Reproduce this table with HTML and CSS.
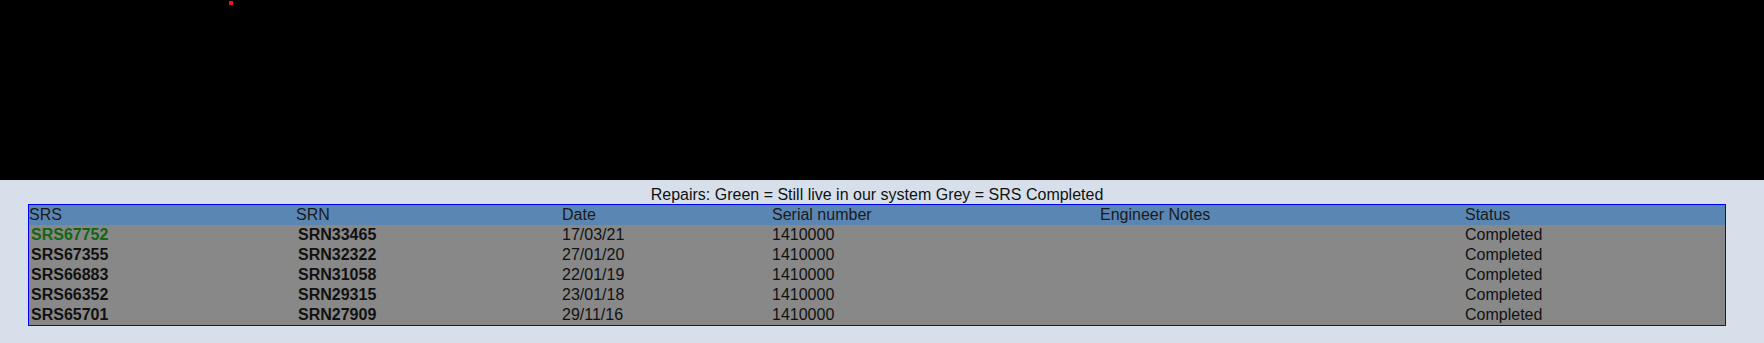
FILE: index.html
```html
<!DOCTYPE html>
<html>
<head>
<meta charset="utf-8">
<link rel="stylesheet" href="styles.css">
</head>
<body>
<div class="top">
  <span class="dot"></span>
</div>
<div class="content">
  <table class="repairs">
    <caption>Repairs: Green = Still live in our system Grey = SRS Completed</caption>
    <colgroup>
      <col class="c-srs">
      <col class="c-srn">
      <col class="c-date">
      <col class="c-serial">
      <col class="c-notes">
      <col class="c-status">
    </colgroup>
    <thead>
      <tr>
        <th>SRS</th>
        <th>SRN</th>
        <th>Date</th>
        <th>Serial number</th>
        <th>Engineer Notes</th>
        <th>Status</th>
      </tr>
    </thead>
    <tbody>
      <tr>
        <td class="id live">SRS67752</td>
        <td class="id">SRN33465</td>
        <td>17/03/21</td>
        <td>1410000</td>
        <td></td>
        <td>Completed</td>
      </tr>
      <tr>
        <td class="id">SRS67355</td>
        <td class="id">SRN32322</td>
        <td>27/01/20</td>
        <td>1410000</td>
        <td></td>
        <td>Completed</td>
      </tr>
      <tr>
        <td class="id">SRS66883</td>
        <td class="id">SRN31058</td>
        <td>22/01/19</td>
        <td>1410000</td>
        <td></td>
        <td>Completed</td>
      </tr>
      <tr>
        <td class="id">SRS66352</td>
        <td class="id">SRN29315</td>
        <td>23/01/18</td>
        <td>1410000</td>
        <td></td>
        <td>Completed</td>
      </tr>
      <tr>
        <td class="id">SRS65701</td>
        <td class="id">SRN27909</td>
        <td>29/11/16</td>
        <td>1410000</td>
        <td></td>
        <td>Completed</td>
      </tr>
    </tbody>
  </table>
</div>
</body>
</html>
```
FILE: styles.css
```css
html, body {
  margin: 0;
  padding: 0;
}
body {
  background: #d7e0ea;
  font-family: "Liberation Sans", Arial, sans-serif;
  font-size: 16px;
  color: #111;
}
.top {
  position: relative;
  height: 180px;
  background: #000;
}
.dot {
  position: absolute;
  left: 229px;
  top: 1px;
  width: 4px;
  height: 4px;
  background: #f01020;
}
.content {
  padding-top: 6px;
  padding-bottom: 17px;
}
.repairs caption {
  text-align: center;
  line-height: 18px;
  color: #111;
}
.repairs {
  margin-left: 28px;
  width: 1698px;
  table-layout: fixed;
  border-collapse: separate;
  border-spacing: 0;
  border: 1px solid #0000ff;
  background: #888888;
}
.c-srs { width: 267px; }
.c-srn { width: 266px; }
.c-date { width: 210px; }
.c-serial { width: 328px; }
.c-notes { width: 365px; }
.c-status { width: 260px; }
.repairs th {
  background: #5a86b3;
  font-weight: normal;
  text-align: left;
  padding: 1px 0;
  line-height: 18px;
  height: 18px;
  color: #1a1a1a;
}
.repairs td {
  padding: 1px 0;
  line-height: 18px;
  height: 18px;
  color: #111;
}
.repairs td.id {
  font-weight: bold;
  padding-left: 2px;
}
.repairs td.live {
  color: #146414;
}
```
